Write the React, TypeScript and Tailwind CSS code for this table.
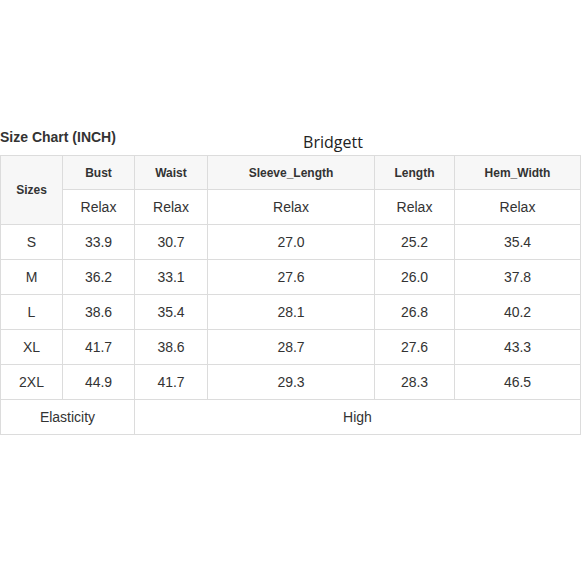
const rows = [
  ["S", "33.9", "30.7", "27.0", "25.2", "35.4"],
  ["M", "36.2", "33.1", "27.6", "26.0", "37.8"],
  ["L", "38.6", "35.4", "28.1", "26.8", "40.2"],
  ["XL", "41.7", "38.6", "28.7", "27.6", "43.3"],
  ["2XL", "44.9", "41.7", "29.3", "28.3", "46.5"],
];

const heads = ["Bust", "Waist", "Sleeve_Length", "Length", "Hem_Width"];

export default function App() {
  return (
    <main className="w-[581px] h-[581px] bg-white text-[#333] font-['Liberation_Sans',Arial,sans-serif] overflow-hidden">
      <div className="h-[128px]" />
      <div className="flex items-end h-[27px] w-[581px]">
        <div className="w-[280px] text-[14px] font-bold pb-[11px] leading-none">Size Chart (INCH)</div>
        <div className="w-[106px] text-center text-[16px] font-['Open_Sans',sans-serif] text-[#222] leading-none pb-[5px]">Bridgett</div>
      </div>
      <table className="border-collapse table-fixed w-[580px]">
        <colgroup>
          <col className="w-[62px]" />
          <col className="w-[72px]" />
          <col className="w-[73px]" />
          <col className="w-[167px]" />
          <col className="w-[80px]" />
          <col className="w-[126px]" />
        </colgroup>
        <tbody>
          <tr className="h-[34px]">
            <td rowSpan={2} className="border border-[#dcdcdc] bg-[#f7f7f7] text-center text-[12px] font-bold">Sizes</td>
            {heads.map((h) => (
              <td key={h} className="border border-[#dcdcdc] bg-[#f7f7f7] text-center text-[12px] font-bold">{h}</td>
            ))}
          </tr>
          <tr className="h-[35px]">
            {heads.map((h) => (
              <td key={h} className="border border-[#dcdcdc] text-center text-[14px]">Relax</td>
            ))}
          </tr>
          {rows.map((r) => (
            <tr key={r[0]} className="h-[35px]">
              {r.map((c, i) => (
                <td key={i} className="border border-[#dcdcdc] text-center text-[14px]">{c}</td>
              ))}
            </tr>
          ))}
          <tr className="h-[35px]">
            <td colSpan={2} className="border border-[#dcdcdc] text-center text-[14px]">Elasticity</td>
            <td colSpan={4} className="border border-[#dcdcdc] text-center text-[14px]">High</td>
          </tr>
        </tbody>
      </table>
    </main>
  );
}
